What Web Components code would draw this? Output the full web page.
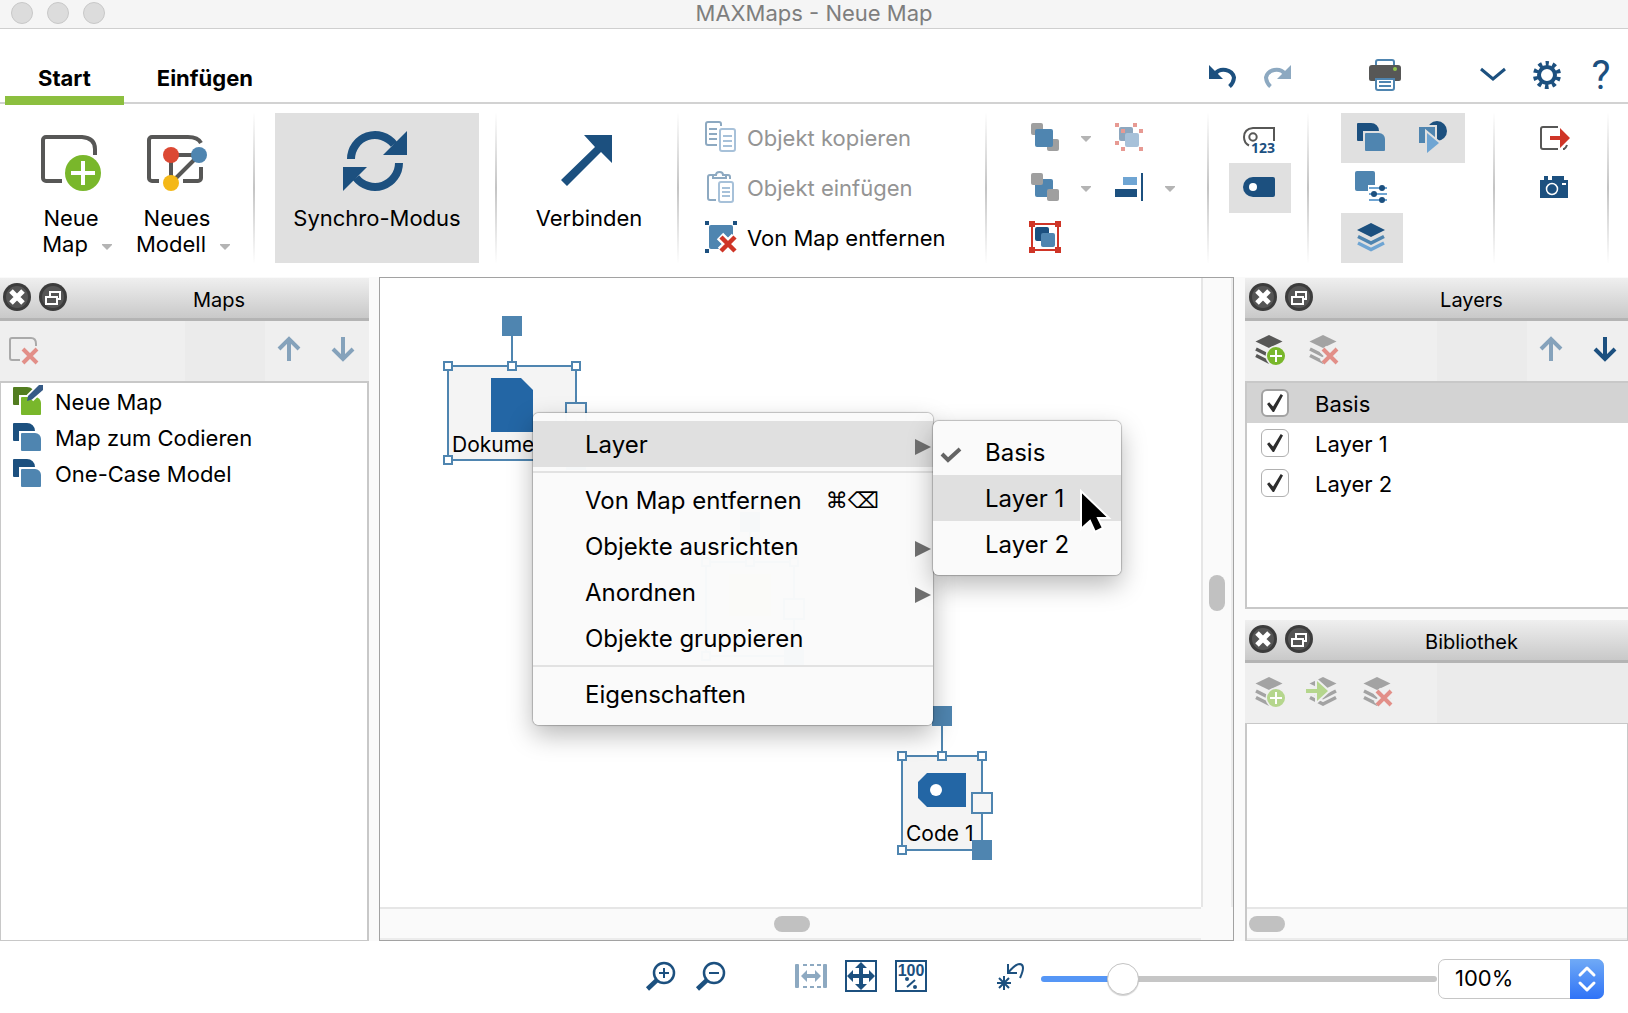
<!DOCTYPE html>
<html lang="de">
<head>
<meta charset="utf-8">
<title>MAXMaps - Neue Map</title>
<style>
  html, body { margin: 0; height: 100%; }
  body { font-family: Inter, "Liberation Sans", sans-serif; font-size: 22px; color: #000; background: #fff; }
</style>
</head>
<body>
<mx-app></mx-app>

<script>
const NAVY = '#1c507f', BLUE = '#4f85b0', SKY = '#6fa5d3', RED = '#cf3527', INK = '#575756';

const stack = (c) => `<path fill="${c}" d="M16 2l13.5 6.5L16 15 2.5 8.5z"/><path fill="none" stroke="${c}" stroke-width="3.5" d="M3 16l13 6.5L29 16M3 22.5L16 29l13-6.5"/>`;
const cross = (c, halo) => `<path stroke="${halo}" stroke-width="9" d="M16 16l14 14M30 16L16 30"/><path stroke="${c}" stroke-width="4" d="M16 16l14 14M30 16L16 30"/>`;
const plus = (c, halo) => `<circle cx="23" cy="23" r="10.5" fill="${halo}"/><circle cx="23" cy="23" r="9" fill="${c}"/><path stroke="#fff" stroke-width="2" d="M17 23h12M23 17v12"/>`;
const mapPair = (a, b) => `<path fill="${a}" d="M3 2H16a8 8 0 0 1 8 8H8v10H3a1 1 0 0 1-1-1V3a1 1 0 0 1 1-1z"/><path fill="${b}" d="M11 12H24a6 6 0 0 1 6 6v11a1 1 0 0 1-1 1H11a1 1 0 0 1-1-1V13a1 1 0 0 1 1-1z"/>`;
const lens = `<circle cx="19" cy="13" r="10" fill="none" stroke="${NAVY}" stroke-width="2.5"/><path stroke="${NAVY}" stroke-width="4.5" d="M2.5 29l9.5-9"/>`;
const undo = (c) => `<path fill="${c}" d="M2 6v14h14z"/><path fill="none" stroke="${c}" stroke-width="4" d="M8 15A10.5 9.5 0 0 1 27 18.5Q26.5 24 22.5 27.5"/>`;
const arrowUp = (c) => `<path fill="none" stroke="${c}" stroke-width="4" d="M16 28V6M6 16L16 6l10 10"/>`;
const arrowDown = (c) => `<path fill="none" stroke="${c}" stroke-width="4" d="M16 4v22M6 16l10 10 10-10"/>`;

const ICONS = {
  newmap: [64, 60, `<path fill="none" stroke="${INK}" stroke-width="4" d="M23 50H7a3 3 0 0 1-3-3V9a3 3 0 0 1 3-3h36q13 1 13 12v6"/><circle cx="44" cy="42" r="20" fill="#fff"/><circle cx="44" cy="42" r="18" fill="#79b72b"/><path stroke="#fff" stroke-width="4" d="M32 42h24M44 30v24"/>`],
  newmodel: [64, 60, `<path fill="none" stroke="${INK}" stroke-width="4" d="M14 50H7a3 3 0 0 1-3-3V9a3 3 0 0 1 3-3h36q10 0 13 6M56 36v11a3 3 0 0 1-3 3H38M26 24v28M26 24h28M54 24L26 52"/><circle cx="26" cy="24" r="8" fill="#dc4833"/><circle cx="54" cy="24" r="8" fill="${BLUE}"/><circle cx="26" cy="52" r="8" fill="#f4b818"/>`],
  sync: [68, 60, `<path fill="${NAVY}" d="M64 0v24H40zM0 60V36h24z"/><path fill="none" stroke="${NAVY}" stroke-width="8" d="M8 28A24 24 0 0 1 51 13.4M56 32A24 24 0 0 1 13 46.6"/>`],
  connect: [68, 60, `<path fill="${NAVY}" d="M57 4v28L46 21 12 55 6 49 40 16 29 4z"/>`],
  copy: [32, 32, `<g fill="none" stroke="#8da9c1" stroke-width="2"><path d="M12 24H3a2 2 0 0 1-2-2V3a2 2 0 0 1 2-2h11a2 2 0 0 1 2 2v2M4 8h8M4 13h8M4 18h8"/></g><g fill="none" stroke="#a7c1d9" stroke-width="2"><rect x="15" y="8" width="15" height="22" rx="2"/><path d="M18 15h9M18 20h9M18 25h9"/></g>`],
  paste: [32, 32, `<g fill="none" stroke="#8da9c1" stroke-width="2"><path d="M11 29H5a2 2 0 0 1-2-2V6a2 2 0 0 1 2-2h3M20 4h3a2 2 0 0 1 2 2v2"/><path d="M8 7V4h3q0-3 3.5-3T18 4h3v3z"/></g><g fill="none" stroke="#a7c1d9" stroke-width="2"><rect x="14" y="11" width="14" height="20" rx="2"/><path d="M17 17h8M17 21h8M17 25h8"/></g>`],
  remove: [32, 32, `<path fill="${NAVY}" d="M0 0h4v4H0zM28 0h4v4h-4zM0 28h4v4H0z"/><rect x="4" y="4" width="24" height="24" rx="2" fill="${BLUE}"/><path stroke="#fff" stroke-width="9" d="M15 15l15 15M30 16L16 30"/><path stroke="${RED}" stroke-width="4.5" d="M16 16l14 14M30 16L16 30"/>`],
  front: [32, 32, `<g fill="#9f9f9f"><rect x="2" y="2" width="12" height="12" rx="2"/><rect x="18" y="18" width="12" height="12" rx="2"/></g><rect x="6" y="8" width="18" height="18" rx="2" fill="${BLUE}"/>`],
  back: [32, 32, `<rect x="6" y="8" width="18" height="18" rx="2" fill="${BLUE}"/><g fill="#9f9f9f"><rect x="2" y="2" width="12" height="12" rx="2"/><rect x="18" y="18" width="12" height="12" rx="2"/></g>`],
  group: [32, 32, `<path fill="none" stroke="${RED}" stroke-width="2" d="M3 3h26v26H3z"/><path fill="${RED}" d="M0 0h6v6H0zM26 0h6v6h-6zM0 26h6v6H0zM26 26h6v6h-6z"/><rect x="6" y="6" width="14" height="14" rx="2" fill="${NAVY}"/><rect x="12" y="12" width="14" height="14" rx="2" fill="${BLUE}"/>`],
  ungroup: [32, 32, `<rect x="6" y="6" width="14" height="14" rx="2" fill="#8da7bf"/><rect x="12" y="12" width="14" height="14" rx="2" fill="#a7c1d9"/><path fill="#e79a93" d="M2 2h4v4H2zM20 2h4v4h-4zM8 8h4v4H8zM26 8h4v4h-4zM2 20h4v4H2zM8 26h4v4H8zM26 26h4v4h-4z"/>`],
  align: [32, 32, `<path fill="${SKY}" d="M10 6h14v8H10z"/><path fill="${NAVY}" d="M2 18h22v8H2zM28 2h2v28h-2z"/>`],
  tag123: [32, 32, `<path fill="none" stroke="${INK}" stroke-width="2" d="M31 20V7H10Q1 8 1 16q0 6 5 8.5"/><circle cx="10" cy="16" r="3.7" fill="none" stroke="${INK}" stroke-width="2"/><text x="8" y="32" font-family="Open Sans, sans-serif" font-weight="700" font-size="14" fill="${NAVY}">123</text>`],
  tag: [32, 32, `<path fill="${NAVY}" d="M10 6h20a2 2 0 0 1 2 2v16a2 2 0 0 1-2 2H10a10 10 0 0 1 0-20z"/><circle cx="10" cy="16" r="4" fill="#fff"/>`],
  maps: [32, 32, mapPair(NAVY, BLUE)],
  mapedit: [32, 32, mapPair('#527d20', '#79b72b') + `<path stroke="#fff" stroke-width="9" d="M31 1L19 13"/><path fill="#365a86" d="M32 0v5L21 14.5l-5 1.5 1-5L28 0z"/>`],
  shapes: [32, 32, `<circle cx="20" cy="10" r="10" fill="${NAVY}"/><path fill="${BLUE}" stroke="#e0e0e0" stroke-width="4" paint-order="stroke" d="M2 6h16v16H2z"/><path fill="${SKY}" stroke="#e0e0e0" stroke-width="4" paint-order="stroke" d="M10 12l12 10-12 10z"/>`],
  props: [32, 32, `<rect width="20" height="20" rx="2" fill="${BLUE}"/><path stroke="#fff" stroke-width="6" d="M13 17h19M13 23h19"/><path stroke="${SKY}" stroke-width="2" d="M14 17h18M14 23h18M14 29h18"/><g fill="${NAVY}"><circle cx="27" cy="17" r="3"/><circle cx="19" cy="23" r="3"/><circle cx="27" cy="29" r="3"/></g>`],
  layers: [32, 32, `<path fill="${NAVY}" d="M16 2l14 7-14 7L2 9z"/><path fill="none" stroke="${BLUE}" stroke-width="3.5" d="M3 15.5L16 22l13-6.5"/><path fill="none" stroke="${SKY}" stroke-width="3.5" d="M3 22L16 28.5 29 22"/>`],
  export: [32, 32, `<path fill="none" stroke="${INK}" stroke-width="2" d="M19 6H4a2 2 0 0 0-2 2v18a2 2 0 0 0 2 2h15M24 28h1q2-1 3-4"/><path fill="${RED}" d="M11 15h10V7l10 10-10 10v-8H11z"/>`],
  camera: [32, 32, `<path fill="${NAVY}" d="M1 9h4V5h4v4h4V5h12v4h4v18H1z"/><circle cx="13" cy="18" r="5.5" fill="none" stroke="#fff" stroke-width="1.5"/><path fill="#fff" d="M23 12h4v2h-4z"/>`],
  undo: [32, 32, undo(NAVY)],
  redo: [32, 32, `<g transform="matrix(-1 0 0 1 32 0)">${undo('#8da9c1')}</g>`],
  printer: [32, 32, `<path fill="#fff" stroke="${BLUE}" stroke-width="2" d="M7 8V3a2 2 0 0 1 2-2h14a2 2 0 0 1 2 2v5"/><path fill="${INK}" d="M3 6h26a3 3 0 0 1 3 3v11a2 2 0 0 1-2 2H2a2 2 0 0 1-2-2V9a3 3 0 0 1 3-3z"/><path fill="#fff" stroke="${BLUE}" stroke-width="2" d="M7 20h18v9a2 2 0 0 1-2 2H9a2 2 0 0 1-2-2z"/><path stroke="${BLUE}" stroke-width="2" d="M10 23h12M10 27h12"/><circle cx="26" cy="10" r="2" fill="#8fc44a"/>`],
  chevron: [32, 32, `<path fill="none" stroke="${NAVY}" stroke-width="3" d="M4 10l12 10 12-10"/>`],
  gear: [32, 32, `<circle cx="16" cy="16" r="8" fill="none" stroke="${NAVY}" stroke-width="4"/><circle cx="16" cy="16" r="11.5" fill="none" stroke="${NAVY}" stroke-width="5" stroke-dasharray="3.613 3.613" stroke-dashoffset="1.8" transform="rotate(-90 16 16)"/>`],
  mapdelete: [32, 32, `<path fill="none" stroke="#aaa" stroke-width="2" d="M13 27H5a2 2 0 0 1-2-2V7a2 2 0 0 1 2-2h19q5 0 5 6v2"/>${cross('#e28f88', '#efefef')}`],
  upoff: [32, 32, arrowUp('#85a2bb')], downoff: [32, 32, arrowDown('#85a2bb')], down: [32, 32, arrowDown(NAVY)],
  layeradd: [32, 32, stack(INK) + plus('#79b72b', '#efefef')],
  layeraddoff: [32, 32, stack('#a3a3a3') + plus('#b5d68d', '#efefef')],
  layerdeloff: [32, 32, stack('#a3a3a3') + cross('#e28f88', '#efefef')],
  layerinoff: [32, 32, stack('#a3a3a3') + `<path fill="#b5d68d" stroke="#efefef" stroke-width="4" paint-order="stroke" d="M-1 14h11V6l11 10-11 10v-8H-1z"/>`],
  zoomin: [32, 32, lens + `<path stroke="${NAVY}" stroke-width="2" d="M14 13h10M19 8v10"/>`],
  zoomout: [32, 32, lens + `<path stroke="${NAVY}" stroke-width="2" d="M14 13h10"/>`],
  fitwidth: [32, 32, `<g fill="#8da9c1"><rect y="4" width="4" height="24" rx="1"/><rect x="28" y="4" width="4" height="24" rx="1"/><path d="M6 16l6-6v4h8v-4l6 6-6 6v-4h-8v4z"/></g><path stroke="#8da9c1" stroke-width="2" stroke-dasharray="4 3" d="M8 5h18M8 27h18"/>`],
  fitpage: [32, 32, `<path fill="none" stroke="${NAVY}" stroke-width="2" d="M1 1h30v30H1z"/><path stroke="${NAVY}" stroke-width="4" d="M6 16h20M16 6v20"/><path fill="${NAVY}" d="M16 2l6 6H10zM16 30l6-6H10zM2 16l6-6v12zM30 16l-6-6v12z"/>`],
  full: [32, 32, `<path fill="none" stroke="${NAVY}" stroke-width="2" d="M1 1h30v30H1z"/><text x="16" y="16" text-anchor="middle" font-family="Liberation Sans Narrow, Liberation Sans, sans-serif" font-weight="700" font-size="16" fill="${NAVY}">100</text><path stroke="${NAVY}" stroke-width="2" d="M12 27l8-7"/><circle cx="12" cy="19" r="2" fill="${NAVY}"/><circle cx="20" cy="27" r="2" fill="${NAVY}"/>`],
  reset: [32, 32, `<g fill="none" stroke="${NAVY}" stroke-width="2"><path d="M9 16v14M2 23h14M4 18l10 10M14 18L4 28M13 4v9h9M13 13Q20 4 25 4q6 1 0 14"/></g>`],
  close: [28, 28, `<circle cx="14" cy="14" r="14" fill="#3c3c3c"/><circle cx="14" cy="14" r="11" fill="#555"/><path stroke="#fff" stroke-width="5" d="M8 8l12 12M20 8L8 20"/>`],
  float: [28, 28, `<circle cx="14" cy="14" r="14" fill="#3c3c3c"/><circle cx="14" cy="14" r="11" fill="#555"/><path fill="none" stroke="#fff" stroke-width="2" d="M7 14h11v7H7zM11 14V9h10v7h-3"/>`],
  tri: [10, 6, `<path fill="#b4b4b4" d="M0 0h10v1L5 6 0 1z"/>`],
  sub: [16, 16, `<path fill="#707070" d="M0 0l16 8-16 8z"/>`],
  check: [20, 16, `<path fill="none" stroke="#646464" stroke-width="4" d="M1 7l6 6L19 2"/>`],
  doc: [42, 54, `<path fill="#2366a5" d="M0 0h30l12 12v42H0z"/>`],
  codetag: [48, 34, `<path fill="#2366a5" d="M9 0h39v34H9l-9-9V9z"/><circle cx="18" cy="17" r="6" fill="#fff"/>`],
  note: [42, 42, `<path fill="#f4e08c" d="M0 0h42v42H0z"/>`],
  stepper: [34, 40, `<path fill="none" stroke="#fff" stroke-width="3" stroke-linecap="round" stroke-linejoin="round" d="M10 16l7-7 7 7M10 24l7 7 7-7"/>`],
  cursor: [30, 48, `<path fill="#000" stroke="#fff" stroke-width="2" d="M2 4v38l9-8 5 11 8-4-5-10h11z"/>`],
};

const define = (tag, css, html) => customElements.define(tag, class extends HTMLElement {
  constructor() {
    super();
    this.attachShadow({ mode: 'open' });
  }
  connectedCallback() {
    if (this.shadowRoot.childNodes.length) return;
    const body = typeof html === 'function' ? html(this) : html;
    this.shadowRoot.innerHTML = `<style>*{box-sizing:border-box}button{font:inherit;color:inherit;background:none;border:0;margin:0;padding:0}${css}</style>${body}`;
  }
});

define('mx-icon', ':host{display:block;flex:none;line-height:0}svg{display:block;overflow:visible}', (el) => {
  const [w, h, art] = ICONS[el.getAttribute('name')];
  return `<svg width="${w}" height="${h}" viewBox="0 0 ${w} ${h}" aria-hidden="true">${art}</svg>`;
});

define('mx-titlebar', `
  :host{display:flex;align-items:center;height:29px;background:#f5f5f5;border-bottom:1px solid #cfcfcf;padding:0 11px}
  .lights{display:flex;gap:14px;flex:1;padding-bottom:2px}
  .lights button{width:22px;height:22px;border-radius:50%;background:#dcdcdc;border:1px solid #c8c8c8}
  h1{font-size:22px;font-weight:400;line-height:26px;margin:0;padding-bottom:2px;color:#7e7e7e}
  .end{flex:1}`,
  `<div class="lights"><button aria-label="Schließen"></button><button aria-label="Minimieren"></button><button aria-label="Zoomen"></button></div><h1><slot></slot></h1><div class="end"></div>`);

define('mx-tab', `
  :host{display:block;position:relative}
  button{height:100%;padding:25px 33px 0;font-weight:700}
  :host([active])::after{content:"";position:absolute;left:0;right:0;bottom:-3px;height:9px;background:#8cbf3f}`,
  `<button role="tab"><slot></slot></button>`);

define('mx-tabbar', `
  :host{display:flex;justify-content:space-between;height:75px;border-bottom:2px solid #d2d2d2;padding-left:5px}
  .tabs,.actions{display:flex}
  .actions{padding-top:19px;align-items:center}
  .actions button{width:54px;height:54px;display:grid;place-items:center}
  .gap{width:54px}
  .actions .help{font:400 40px/40px Roboto,sans-serif;color:${NAVY};padding-top:2px}`,
  `<div class="tabs" role="tablist"><mx-tab active>Start</mx-tab><mx-tab>Einfügen</mx-tab></div>
   <div class="actions">
    <button aria-label="Rückgängig"><mx-icon name="undo"></mx-icon></button><button aria-label="Wiederholen"><mx-icon name="redo"></mx-icon></button><span class="gap"></span>
    <button aria-label="Drucken"><mx-icon name="printer"></mx-icon></button><span class="gap"></span>
    <button aria-label="Menüband ausblenden"><mx-icon name="chevron"></mx-icon></button><button aria-label="Einstellungen"><mx-icon name="gear"></mx-icon></button><button class="help">?</button>
   </div>`);

define('mx-big', `
  :host{display:block;height:150px}
  button{height:100%;width:100%;padding:18px 16px 0;display:flex;flex-direction:column;align-items:center;gap:14px;line-height:26px;white-space:nowrap}
  :host([pressed]) button{background:#e0e0e0}
  .more{display:flex;gap:14px;align-items:center;padding-left:12px}
  .label{display:flex;flex-direction:column;align-items:center}
  .more mx-icon{padding-top:6px}`,
  (el) => `<button><mx-icon name="${el.getAttribute('icon')}"></mx-icon><span class="label"><slot></slot>${el.hasAttribute('second') ? `<span class="more">${el.getAttribute('second')}<mx-icon name="tri"></mx-icon></span>` : ''}</span></button>`);

define('mx-row', `
  :host{display:block}
  button{height:50px;display:flex;align-items:center;gap:10px;padding-bottom:2px;white-space:nowrap}
  span{padding-top:2px}
  :host([off]) button{color:#949494}`,
  (el) => `<button><mx-icon name="${el.getAttribute('icon')}"></mx-icon><span><slot></slot></span></button>`);

define('mx-tool', `
  :host{display:flex;align-items:center}
  button{width:62px;height:50px;padding:8px 14px 10px}
  .drop{width:22px;padding:2px 4px 0}
  :host([pressed]) button:first-of-type{background:#e0e0e0}`,
  (el) => `<button aria-label="${el.getAttribute('label')}"><mx-icon name="${el.getAttribute('icon')}"></mx-icon></button>${el.hasAttribute('drop') ? '<button class="drop" aria-label="Mehr"><mx-icon name="tri"></mx-icon></button>' : ''}`);

define('mx-group', `
  :host{display:flex;border-right:2px solid;border-image:linear-gradient(#fff,#c4c4c4 50%,#fff) 1}
  .in{display:flex;flex:1;justify-content:center}
  :host([cols]) .in{display:grid;grid-auto-rows:50px;grid-template-columns:var(--cols);justify-content:start;align-content:start}
  :host([stack]) .in{flex-direction:column;justify-content:flex-start}`,
  `<div class="in"><slot></slot></div>`);

define('mx-ribbon', `
  :host{display:flex;padding:9px 0 14px}
  mx-group{flex:none}
  mx-big.fix{width:106px}
  .new{padding:0 23px 0 18px}.sync{padding:0 16px 0 20px}.link{padding:0 18px 0 22px;width:182px}
  .obj{padding:0 0 0 26px;width:308px}
  .arr{padding:0 24px 0 28px;--cols:84px 84px}
  .tag{padding:0 16px 0 20px;--cols:62px}
  .lay{padding:0 28px 0 32px;--cols:62px 62px}
  .out{padding:0 20px 0 30px;--cols:62px}
  .sync mx-big{width:204px}
  .new-row{grid-column:1}`,
  `<mx-group class="new"><mx-big class="fix" icon="newmap" second="Map">Neue</mx-big><mx-big class="fix" icon="newmodel" second="Modell">Neues</mx-big></mx-group>
   <mx-group class="sync"><mx-big icon="sync" pressed>Synchro-Modus</mx-big></mx-group>
   <mx-group class="link"><mx-big icon="connect">Verbinden</mx-big></mx-group>
   <mx-group class="obj" stack><mx-row icon="copy" off>Objekt kopieren</mx-row><mx-row icon="paste" off>Objekt einfügen</mx-row><mx-row icon="remove">Von Map entfernen</mx-row></mx-group>
   <mx-group class="arr" cols><mx-tool icon="front" label="Nach vorne" drop></mx-tool><mx-tool icon="ungroup" label="Gruppierung aufheben"></mx-tool><mx-tool icon="back" label="Nach hinten" drop></mx-tool><mx-tool icon="align" label="Ausrichten" drop></mx-tool><mx-tool icon="group" label="Gruppieren"></mx-tool></mx-group>
   <mx-group class="tag" cols><mx-tool icon="tag123" label="Code-Häufigkeit"></mx-tool><mx-tool icon="tag" label="Code-Label" pressed></mx-tool></mx-group>
   <mx-group class="lay" cols><mx-tool icon="maps" label="Maps" pressed></mx-tool><mx-tool icon="shapes" label="Bibliothek" pressed></mx-tool><mx-tool class="new-row" icon="props" label="Eigenschaften"></mx-tool><mx-tool class="new-row" icon="layers" label="Layers" pressed></mx-tool></mx-group>
   <mx-group class="out" cols><mx-tool icon="export" label="Exportieren"></mx-tool><mx-tool icon="camera" label="Bildschirmfoto"></mx-tool></mx-group>`);

define('mx-dock', `
  :host{display:flex;flex-direction:column;min-height:0}
  header{display:flex;align-items:center;height:43px;flex:none;background:linear-gradient(#efefef,#c9c9c9);border-bottom:3px solid #b4b4b4;padding:0 6px 0 var(--lead,4px)}
  header button{width:28px;height:28px;margin:0 8px 2px 0}
  h2{flex:1;margin:0;text-align:center;font-size:20px;font-weight:400;line-height:26px;padding-top:4px}
  nav{display:flex;height:60px;flex:none;background:#efefef;align-items:stretch}
  .start{width:50%;padding:8px 4px 12px calc(4px + var(--lead,4px));display:flex;gap:22px}
  .band{flex:1;background:#ebebeb}
  .end{padding:8px var(--end,7px) 12px 8px;display:flex;gap:22px}
  .end:empty{display:none}
  .body{flex:1;background:#fff;border:2px solid #c8c8c8;border-width:var(--edge,2px);min-height:0;display:flex;flex-direction:column}`,
  (el) => {
    const tools = (a) => (el.getAttribute(a) || '').split(' ').filter(Boolean).map((n) => { const [i, l] = n.split(':'); return `<button aria-label="${l}"><mx-icon name="${i}"></mx-icon></button>`; }).join('');
    return `<header><button aria-label="Schließen"><mx-icon name="close"></mx-icon></button><button aria-label="Abdocken"><mx-icon name="float"></mx-icon></button><h2>${el.getAttribute('heading')}</h2></header>
    <nav><div class="start">${tools('left')}</div><div class="band"></div><div class="end">${tools('right')}</div></nav>
    <div class="body"><slot></slot></div>`;
  });

define('mx-maprow', `
  :host{display:block}
  button{display:flex;width:100%;height:36px;align-items:center;gap:12px;padding-left:10px;text-align:left}
  span{padding-top:2px}`,
  (el) => `<button><mx-icon name="${el.getAttribute('icon')}"></mx-icon><span><slot></slot></span></button>`);

define('mx-layer', `
  :host{display:block}
  :host([selected]){background:#d3d3d3}
  label{display:flex;align-items:center;height:40px;gap:26px;padding-left:14px}
  span{padding-top:2px}
  input{appearance:none;margin:0;width:28px;height:28px;border:1px solid #b0b0b0;border-radius:6px;background:#fff;display:grid;place-items:center}
  :host([selected]) input{border:2px solid #a2a2a2}
  input:checked::before{content:"";width:16px;height:18px;background:#2c2c2c;clip-path:polygon(0 56%,14% 46%,38% 70%,86% 0,100% 8%,44% 100%,36% 100%)}`,
  `<label><input type="checkbox" checked><span><slot></slot></span></label>`);

define('mx-node', `
  :host{position:absolute;display:block;background:#f4f4f4;border:2px solid ${BLUE};height:96px}
  i{position:absolute;width:10px;height:10px;background:#fff;border:2px solid ${BLUE}}
  .tl{left:-6px;top:-6px}.tm{left:calc(50% - 5px);top:-6px}.tr{right:-6px;top:-6px}.bl{left:-6px;bottom:-6px}
  .big{width:22px;height:22px;right:-12px;top:calc(50% - 11px);background:#f6f6f6}
  .br{width:20px;height:20px;right:-11px;bottom:-11px;background:${BLUE}}
  .rot{width:20px;height:20px;left:calc(50% - 10px);top:-51px;background:${BLUE}}
  .stem{width:2px;height:38px;left:calc(50% - 1px);top:-35px;border:0;background:${BLUE}}
  .in{display:flex;flex-direction:column;align-items:center;justify-content:space-between;height:100%;padding:var(--top,11px) 0 2px;line-height:26px;white-space:nowrap;font-size:21px}
  .in span{align-self:flex-start;padding-left:3px}`,
  (el) => `<div class="in"><mx-icon name="${el.getAttribute('icon')}"></mx-icon><span><slot></slot></span></div>
   <i class="stem"></i><i class="rot"></i><i class="tl"></i><i class="tm"></i><i class="tr"></i><i class="bl"></i><i class="big"></i><i class="br"></i>`);

define('mx-menu', `
  :host{position:absolute;display:block;background:rgba(250,250,250,.98);border-radius:6px;padding:8px 0;box-shadow:0 0 1px 1px rgba(0,0,0,.22),0 10px 26px rgba(0,0,0,.28);font-size:24px}
  ::slotted(hr){border:0;height:2px;background:#e2e2e2;margin:4px 0}`,
  `<div role="menu"><slot></slot></div>`);

define('mx-item', `
  :host{display:block}
  button{display:flex;align-items:center;width:100%;height:46px;padding:0 2px 0 8px;text-align:left;white-space:nowrap}
  :host([hot]) button{background:#e0e0e0}
  .mark{width:44px;flex:none;padding-top:6px}
  .key{font:22px/26px "DejaVu Sans",sans-serif;padding:2px 0 0 24px}
  .go{padding-top:6px;margin-left:auto}`,
  (el) => `<button role="menuitem"><span class="mark">${el.hasAttribute('checked') ? '<mx-icon name="check"></mx-icon>' : ''}</span><slot></slot>${el.hasAttribute('key') ? `<span class="key">${el.getAttribute('key')}</span>` : ''}${el.hasAttribute('sub') ? '<mx-icon class="go" name="sub"></mx-icon>' : ''}</button>`);

define('mx-scroll', `
  :host{display:flex;background:#fafafa}
  :host([dir=v]){border-left:2px solid #e6e6e6;border-right:2px solid #ececec;flex-direction:column;align-items:center}
  :host([dir=h]){border-top:2px solid #e6e6e6;border-bottom:2px solid #ececec;align-items:center;height:33px}
  .b{flex:var(--before,0) 0 0px}.a{flex:var(--after,1) 0 0px}
  .t{background:#c1c1c1;border-radius:8px;margin:0 2px}
  :host([dir=v]) .t{width:16px;height:36px}:host([dir=h]) .t{width:36px;height:16px}`,
  `<span class="b"></span><span class="t"></span><span class="a"></span>`);

define('mx-canvas', `
  :host{display:grid;grid-template:1fr 33px/1fr 32px;border:1px solid #a2a2a2;background:#fff;position:relative;min-width:0;margin-right:1px}
  .v{grid-area:1/2}.h{grid-area:2/1}.c{grid-area:2/2;background:#fafafa}
  .v{--before:297;--after:296}.h{--before:394;--after:391}
  .doc{left:67px;top:87px;width:130px}
  .code{left:521px;top:477px;width:82px;--top:16px}
  .memo{left:325px;top:283px;width:90px}
  .main{left:153px;top:135px;width:400px}
  .side{left:553px;top:143px;width:188px}
  .cur{position:absolute;left:699px;top:209px}`,
  `<mx-scroll class="v" dir="v"></mx-scroll><mx-scroll class="h" dir="h"></mx-scroll><div class="c"></div>
   <mx-node class="doc" icon="doc">Dokument 1</mx-node><mx-node class="memo" icon="note"></mx-node><mx-node class="code" icon="codetag">Code 1</mx-node>
   <mx-menu class="main"><mx-item hot sub>Layer</mx-item><hr><mx-item key="⌘⌫">Von Map entfernen</mx-item><mx-item sub>Objekte ausrichten</mx-item><mx-item sub>Anordnen</mx-item><mx-item>Objekte gruppieren</mx-item><hr><mx-item>Eigenschaften</mx-item></mx-menu>
   <mx-menu class="side"><mx-item checked>Basis</mx-item><mx-item hot>Layer 1</mx-item><mx-item>Layer 2</mx-item></mx-menu>
   <mx-icon class="cur" name="cursor"></mx-icon>`);

define('mx-status', `
  :host{display:flex;justify-content:flex-end;align-items:center;height:72px;padding:4px 24px 0 0;background:#fff}
  .g{display:flex;gap:18px;padding-bottom:6px}
  .g+.g{margin-left:68px}
  input{appearance:none;width:396px;height:32px;margin:0 1px 0 14px;background:none}
  input::-webkit-slider-runnable-track{height:6px;border-radius:3px;background:linear-gradient(90deg,#5596f6 21%,#c6c6c6 21%)}
  input::-webkit-slider-thumb{appearance:none;width:32px;height:32px;margin-top:-13px;border-radius:50%;background:#fff;border:1px solid #c4c4c4;box-shadow:0 1px 1px rgba(0,0,0,.18)}
  .combo{display:flex;width:166px;height:40px;position:relative}
  select{appearance:none;font:inherit;width:100%;height:40px;border:1px solid #c6c6c6;border-radius:7px;padding:0 40px 2px 16px;background:#fff;color:#000}
  .combo mx-icon{position:absolute;right:0;top:0;background:linear-gradient(#70aaf6,#2f73f7);border-radius:0 7px 7px 0;pointer-events:none}`,
  `<div class="g"><button aria-label="Vergrößern"><mx-icon name="zoomin"></mx-icon></button><button aria-label="Verkleinern"><mx-icon name="zoomout"></mx-icon></button></div>
   <div class="g"><button aria-label="Breite anpassen"><mx-icon name="fitwidth"></mx-icon></button><button aria-label="Alles zeigen"><mx-icon name="fitpage"></mx-icon></button><button aria-label="Originalgröße"><mx-icon name="full"></mx-icon></button></div>
   <div class="g"><button aria-label="Zoom zurücksetzen"><mx-icon name="reset"></mx-icon></button></div>
   <input type="range" min="0" max="1000" value="182" aria-label="Zoom">
   <div class="combo"><select aria-label="Zoomstufe"><option>100%</option></select><mx-icon name="stepper"></mx-icon></div>`);

define('mx-app', `
  :host{display:flex;flex-direction:column;min-height:100vh}
  main{flex:1;display:grid;grid-template-columns:369px minmax(0,1fr) 383px;column-gap:10px;background:#fafafa}
  .left{margin-top:1px;--lead:3px;--end:10px;--edge:2px 2px 1px 1px}
  .right{display:grid;grid-template-rows:331px minmax(0,1fr);row-gap:11px;margin-top:1px}
  .flush{--edge:2px 0 2px 2px}
  .thin{--edge:1px 1px 1px 2px}
  .fill{flex:1}`,
  `<mx-titlebar>MAXMaps - Neue Map</mx-titlebar>
   <mx-tabbar></mx-tabbar>
   <mx-ribbon></mx-ribbon>
   <main>
    <mx-dock class="left" heading="Maps" left="mapdelete:Löschen" right="upoff:Aufwärts downoff:Abwärts">
     <mx-maprow icon="mapedit">Neue Map</mx-maprow><mx-maprow icon="maps">Map zum Codieren</mx-maprow><mx-maprow icon="maps">One-Case Model</mx-maprow>
    </mx-dock>
    <mx-canvas></mx-canvas>
    <div class="right">
     <mx-dock class="flush" heading="Layers" left="layeradd:Hinzufügen layerdeloff:Löschen" right="upoff:Aufwärts down:Abwärts">
      <mx-layer selected>Basis</mx-layer><mx-layer>Layer 1</mx-layer><mx-layer>Layer 2</mx-layer>
     </mx-dock>
     <mx-dock class="thin" heading="Bibliothek" left="layeraddoff:Hinzufügen layerinoff:Einfügen layerdeloff:Löschen">
      <div class="fill"></div><mx-scroll dir="h"></mx-scroll>
     </mx-dock>
    </div>
   </main>
   <mx-status></mx-status>`);
</script>
</body>
</html>
